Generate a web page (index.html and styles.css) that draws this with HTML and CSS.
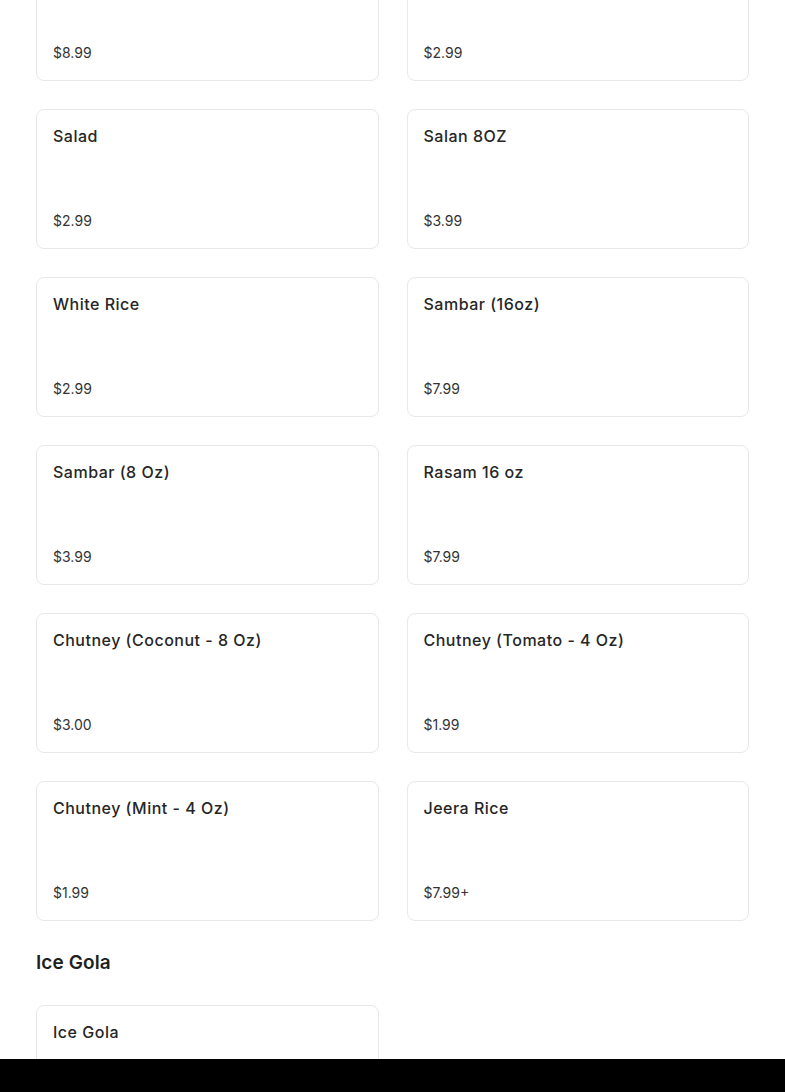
FILE: index.html
```html
<!DOCTYPE html>
<html lang="en">
<head>
<meta charset="utf-8">
<title>Menu</title>
<link rel="stylesheet" href="styles.css">
</head>
<body>
<main class="menu">
  <section class="section first">
    <div class="grid">
      <div class="card"><div class="name"></div><div class="price">$8.99</div></div>
      <div class="card"><div class="name"></div><div class="price">$2.99</div></div>
      <div class="card"><div class="name">Salad</div><div class="price">$2.99</div></div>
      <div class="card"><div class="name">Salan 8OZ</div><div class="price">$3.99</div></div>
      <div class="card"><div class="name">White Rice</div><div class="price">$2.99</div></div>
      <div class="card"><div class="name">Sambar (16oz)</div><div class="price">$7.99</div></div>
      <div class="card"><div class="name">Sambar (8 Oz)</div><div class="price">$3.99</div></div>
      <div class="card"><div class="name">Rasam 16 oz</div><div class="price">$7.99</div></div>
      <div class="card"><div class="name">Chutney (Coconut - 8 Oz)</div><div class="price">$3.00</div></div>
      <div class="card"><div class="name">Chutney (Tomato - 4 Oz)</div><div class="price">$1.99</div></div>
      <div class="card"><div class="name">Chutney (Mint - 4 Oz)</div><div class="price">$1.99</div></div>
      <div class="card"><div class="name">Jeera Rice</div><div class="price">$7.99+</div></div>
    </div>
  </section>
  <section class="section">
    <h2 class="section-title">Ice Gola</h2>
    <div class="grid">
      <div class="card"><div class="name">Ice Gola</div><div class="price"></div></div>
    </div>
  </section>
</main>
<div class="bottom-bar"></div>
</body>
</html>
```
FILE: styles.css
```css
html, body {
  margin: 0;
  padding: 0;
  background: #ffffff;
}
body {
  font-family: "Inter", "Noto Sans", sans-serif;
  color: #212121;
}
.menu {
  padding: 0 36px 80px 36px;
  margin-top: -59px;
  display: flex;
  flex-direction: column;
  gap: 28px;
}
.section {
  display: flex;
  flex-direction: column;
  gap: 28px;
}
.section-title {
  margin: 0;
  font-size: 19px;
  line-height: 28px;
  font-weight: 600;
  letter-spacing: 0.1px;
  color: #1f1f1f;
}
.grid {
  display: grid;
  grid-template-columns: 1fr 1fr;
  gap: 28px 28px;
}
.card {
  box-sizing: border-box;
  height: 140px;
  border: 1px solid #e8e8e8;
  border-radius: 8px;
  padding: 16px;
  display: flex;
  flex-direction: column;
  justify-content: space-between;
  background: #fff;
}
.name {
  font-size: 16px;
  line-height: 20px;
  min-height: 20px;
  font-weight: 500;
  letter-spacing: 0.5px;
  color: #262626;
}
.price {
  font-size: 14px;
  line-height: 22px;
  min-height: 22px;
  font-weight: 400;
  color: #333333;
}
.bottom-bar {
  position: fixed;
  left: 0;
  right: 0;
  bottom: 0;
  height: 33px;
  background: #000;
}
```
